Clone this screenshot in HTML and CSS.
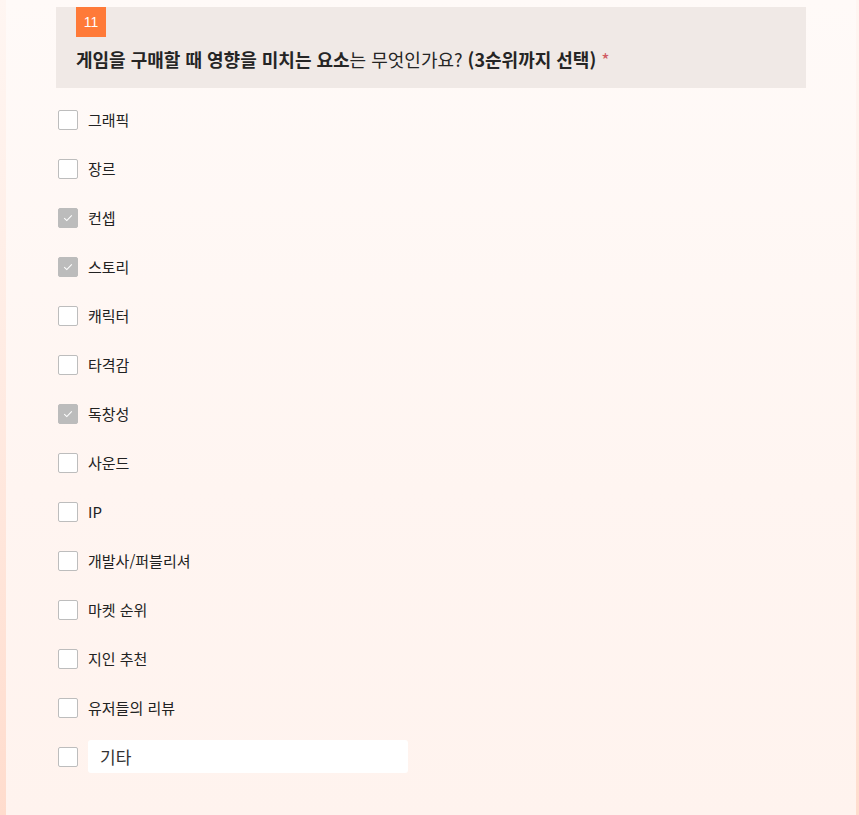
FILE: index.html
```html
<!DOCTYPE html>
<html lang="ko">
<head>
<meta charset="utf-8">
<link rel="stylesheet" href="styles.css">
</head>
<body>
<main class="panel">
  <section class="question">
    <header class="q-head">
      <div class="badge">11</div>
      <h2 class="q-title"><b>게임을 구매할 때 영향을 미치는 요소</b>는 무엇인가요? <b>(3순위까지 선택)</b> <span class="req">*</span></h2>
    </header>
    <ul class="options">
      <li class="opt"><span class="box"></span><span class="lbl">그래픽</span></li>
      <li class="opt"><span class="box"></span><span class="lbl">장르</span></li>
      <li class="opt"><span class="box checked"><svg viewBox="0 0 10 8" width="10" height="8"><path d="M1.2 4.2 L3.8 6.6 L8.8 1.4" fill="none" stroke="#fff" stroke-width="1.1"/></svg></span><span class="lbl">컨셉</span></li>
      <li class="opt"><span class="box checked"><svg viewBox="0 0 10 8" width="10" height="8"><path d="M1.2 4.2 L3.8 6.6 L8.8 1.4" fill="none" stroke="#fff" stroke-width="1.1"/></svg></span><span class="lbl">스토리</span></li>
      <li class="opt"><span class="box"></span><span class="lbl">캐릭터</span></li>
      <li class="opt"><span class="box"></span><span class="lbl">타격감</span></li>
      <li class="opt"><span class="box checked"><svg viewBox="0 0 10 8" width="10" height="8"><path d="M1.2 4.2 L3.8 6.6 L8.8 1.4" fill="none" stroke="#fff" stroke-width="1.1"/></svg></span><span class="lbl">독창성</span></li>
      <li class="opt"><span class="box"></span><span class="lbl">사운드</span></li>
      <li class="opt"><span class="box"></span><span class="lbl">IP</span></li>
      <li class="opt"><span class="box"></span><span class="lbl">개발사/퍼블리셔</span></li>
      <li class="opt"><span class="box"></span><span class="lbl">마켓 순위</span></li>
      <li class="opt"><span class="box"></span><span class="lbl">지인 추천</span></li>
      <li class="opt"><span class="box"></span><span class="lbl">유저들의 리뷰</span></li>
      <li class="opt"><span class="box"></span><span class="other">기타</span></li>
    </ul>
  </section>
</main>
</body>
</html>
```
FILE: styles.css
```css
html, body {
  margin: 0;
  padding: 0;
}
body {
  min-height: 815px;
  background: linear-gradient(to bottom, #fff6f2 0%, #ffeae1 50%, #ffdccd 100%);
  font-family: "Noto Sans CJK KR", "Noto Sans", sans-serif;
  color: #222;
}
.panel {
  margin: 0 3px 0 6px;
  min-height: 815px;
  box-sizing: border-box;
  padding: 7px 50px 0;
  background: linear-gradient(to bottom, #fffaf8 0%, #fff5f1 60%, #fff3ee 100%);
}
.q-head {
  background: #f0e9e6;
  padding: 0 20px 18px;
}
.badge {
  width: 30px;
  height: 30px;
  background: #ff7a38;
  color: #fff;
  font-family: "Liberation Sans", Arial, sans-serif;
  font-size: 14px;
  line-height: 30px;
  text-align: center;
}
.q-title {
  margin: 11px 0 0;
  font-size: 18px;
  line-height: 22px;
  font-weight: 400;
  color: #252525;
}
.q-title b {
  font-weight: 700;
}
.req {
  color: #d05a62;
}
.options {
  list-style: none;
  margin: 0;
  padding: 21px 0 0 2px;
}
.opt {
  display: flex;
  align-items: center;
  height: 49px;
  margin-top: -14px;
  margin-bottom: 14px;
}
.box {
  width: 20px;
  height: 20px;
  box-sizing: border-box;
  border: 1px solid #bdbdbd;
  border-radius: 2px;
  background: #fff;
  display: flex;
  align-items: center;
  justify-content: center;
  flex-shrink: 0;
}
.box.checked {
  background: #bcbcbc;
  border-color: #bcbcbc;
}
.lbl {
  margin-left: 10px;
  font-size: 15px;
  color: #222;
}
.other {
  margin-left: 10px;
  width: 320px;
  height: 33px;
  box-sizing: border-box;
  background: #fff;
  border-radius: 3px;
  padding-left: 12px;
  font-size: 17px;
  line-height: 33px;
  color: #333;
}
```
